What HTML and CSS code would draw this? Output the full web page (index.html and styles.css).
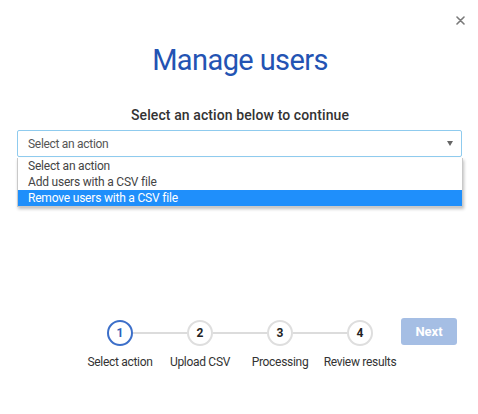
FILE: index.html
```html
<!DOCTYPE html>
<html lang="en">
<head>
<meta charset="utf-8">
<title>Manage users</title>
<link rel="stylesheet" href="styles.css">
</head>
<body>
<div class="dialog">
  <div class="topbar">
    <button class="close" aria-label="Close">
      <svg width="9" height="9" viewBox="0 0 9 9"><path d="M1 1L8 8M8 1L1 8" stroke="#7a7a7a" stroke-width="1.6" stroke-linecap="round"/></svg>
    </button>
  </div>
  <h1 class="title">Manage users</h1>
  <p class="subtitle">Select an action below to continue</p>
  <div class="select-wrap">
    <div class="select">
      <span class="select-value">Select an action</span>
      <span class="caret"></span>
    </div>
    <ul class="options">
      <li class="option">Select an action</li>
      <li class="option">Add users with a CSV file</li>
      <li class="option active">Remove users with a CSV file</li>
    </ul>
  </div>
  <div class="footer">
    <ol class="steps">
      <li class="step current"><span class="dot">1</span><span class="label">Select action</span></li>
      <li class="step"><span class="dot">2</span><span class="label">Upload CSV</span></li>
      <li class="step"><span class="dot">3</span><span class="label">Processing</span></li>
      <li class="step last"><span class="dot">4</span><span class="label">Review results</span></li>
    </ol>
    <button class="next" disabled>Next</button>
  </div>
</div>
</body>
</html>
```

FILE: styles.css
```css
* { box-sizing: border-box; }
html, body { margin: 0; padding: 0; background: #fff; }
body {
  font-family: Roboto, "Noto Sans", sans-serif;
  color: #333;
  width: 478px;
  height: 414px;
  overflow: hidden;
}
.dialog {
  height: 414px;
  display: flex;
  flex-direction: column;
  padding: 0 15px 0 17px;
}
.topbar {
  display: flex;
  justify-content: flex-end;
  padding-top: 15px;
  height: 26px;
}
.close {
  border: 0;
  background: none;
  padding: 0;
  width: 11px;
  height: 11px;
  margin-right: -3px;
  display: flex;
  align-items: center;
  justify-content: center;
  cursor: pointer;
}
.title {
  margin: 14px 0 0;
  text-align: center;
  font-size: 29px;
  font-weight: 400;
  color: #2353b3;
  letter-spacing: -0.6px;
  line-height: 40px;
}
.subtitle {
  margin: 27px 0 0;
  text-align: center;
  font-size: 14px;
  font-weight: 500;
  color: #333;
  line-height: 16px;
  letter-spacing: 0.1px;
}
.select-wrap {
  position: relative;
  margin-top: 7px;
  margin-right: 1px;
}
.select {
  height: 27px;
  border: 1px solid #8fcbee;
  border-radius: 2px;
  display: flex;
  align-items: center;
  justify-content: space-between;
  padding: 0 8px 0 10px;
  font-size: 12px;
  color: #555;
  letter-spacing: -0.3px;
}
.caret {
  width: 0;
  height: 0;
  border-left: 3.5px solid transparent;
  border-right: 3.5px solid transparent;
  border-top: 5px solid #666;
}
.options {
  position: absolute;
  left: 0;
  right: -1px;
  top: 28px;
  margin: 0;
  padding: 0;
  list-style: none;
  background: #fff;
  border: 1px solid #c9c9c9;
  border-top: 0;
  box-shadow: 1px 2px 3px rgba(0,0,0,0.25);
}
.option {
  height: 16px;
  line-height: 16px;
  font-size: 12px;
  color: #444;
  padding-left: 10px;
  letter-spacing: -0.2px;
}
.option.active {
  background: #1f8ffb;
  color: #fff;
}
.footer {
  margin-top: auto;
  margin-bottom: 45px;
  display: flex;
  align-items: flex-start;
  justify-content: flex-end;
  padding-right: 6px;
}
.steps {
  display: flex;
  margin: 0;
  padding: 0;
  list-style: none;
}
.step {
  position: relative;
  width: 80px;
  display: flex;
  flex-direction: column;
  align-items: center;
}
.step::after {
  content: "";
  position: absolute;
  left: 53px;
  width: 54px;
  top: 12px;
  height: 2px;
  background: #dcdcdc;
}
.step.last::after { display: none; }
.dot {
  width: 26px;
  height: 26px;
  border-radius: 50%;
  border: 2px solid #dedede;
  display: flex;
  align-items: center;
  justify-content: center;
  font-size: 12px;
  font-weight: 700;
  color: #222;
  background: #fff;
}
.step.current .dot {
  border-color: #3c6fc9;
  color: #2e5fba;
}
.label {
  margin-top: 9px;
  font-size: 12px;
  color: #333;
  white-space: nowrap;
  line-height: 14px;
  letter-spacing: -0.3px;
}
.next {
  margin-left: 1px;
  margin-top: -2px;
  width: 56px;
  height: 27px;
  border: 0;
  border-radius: 3px;
  background: #a5bee4;
  color: #fff;
  font-family: inherit;
  font-size: 13px;
  font-weight: 700;
}
```
